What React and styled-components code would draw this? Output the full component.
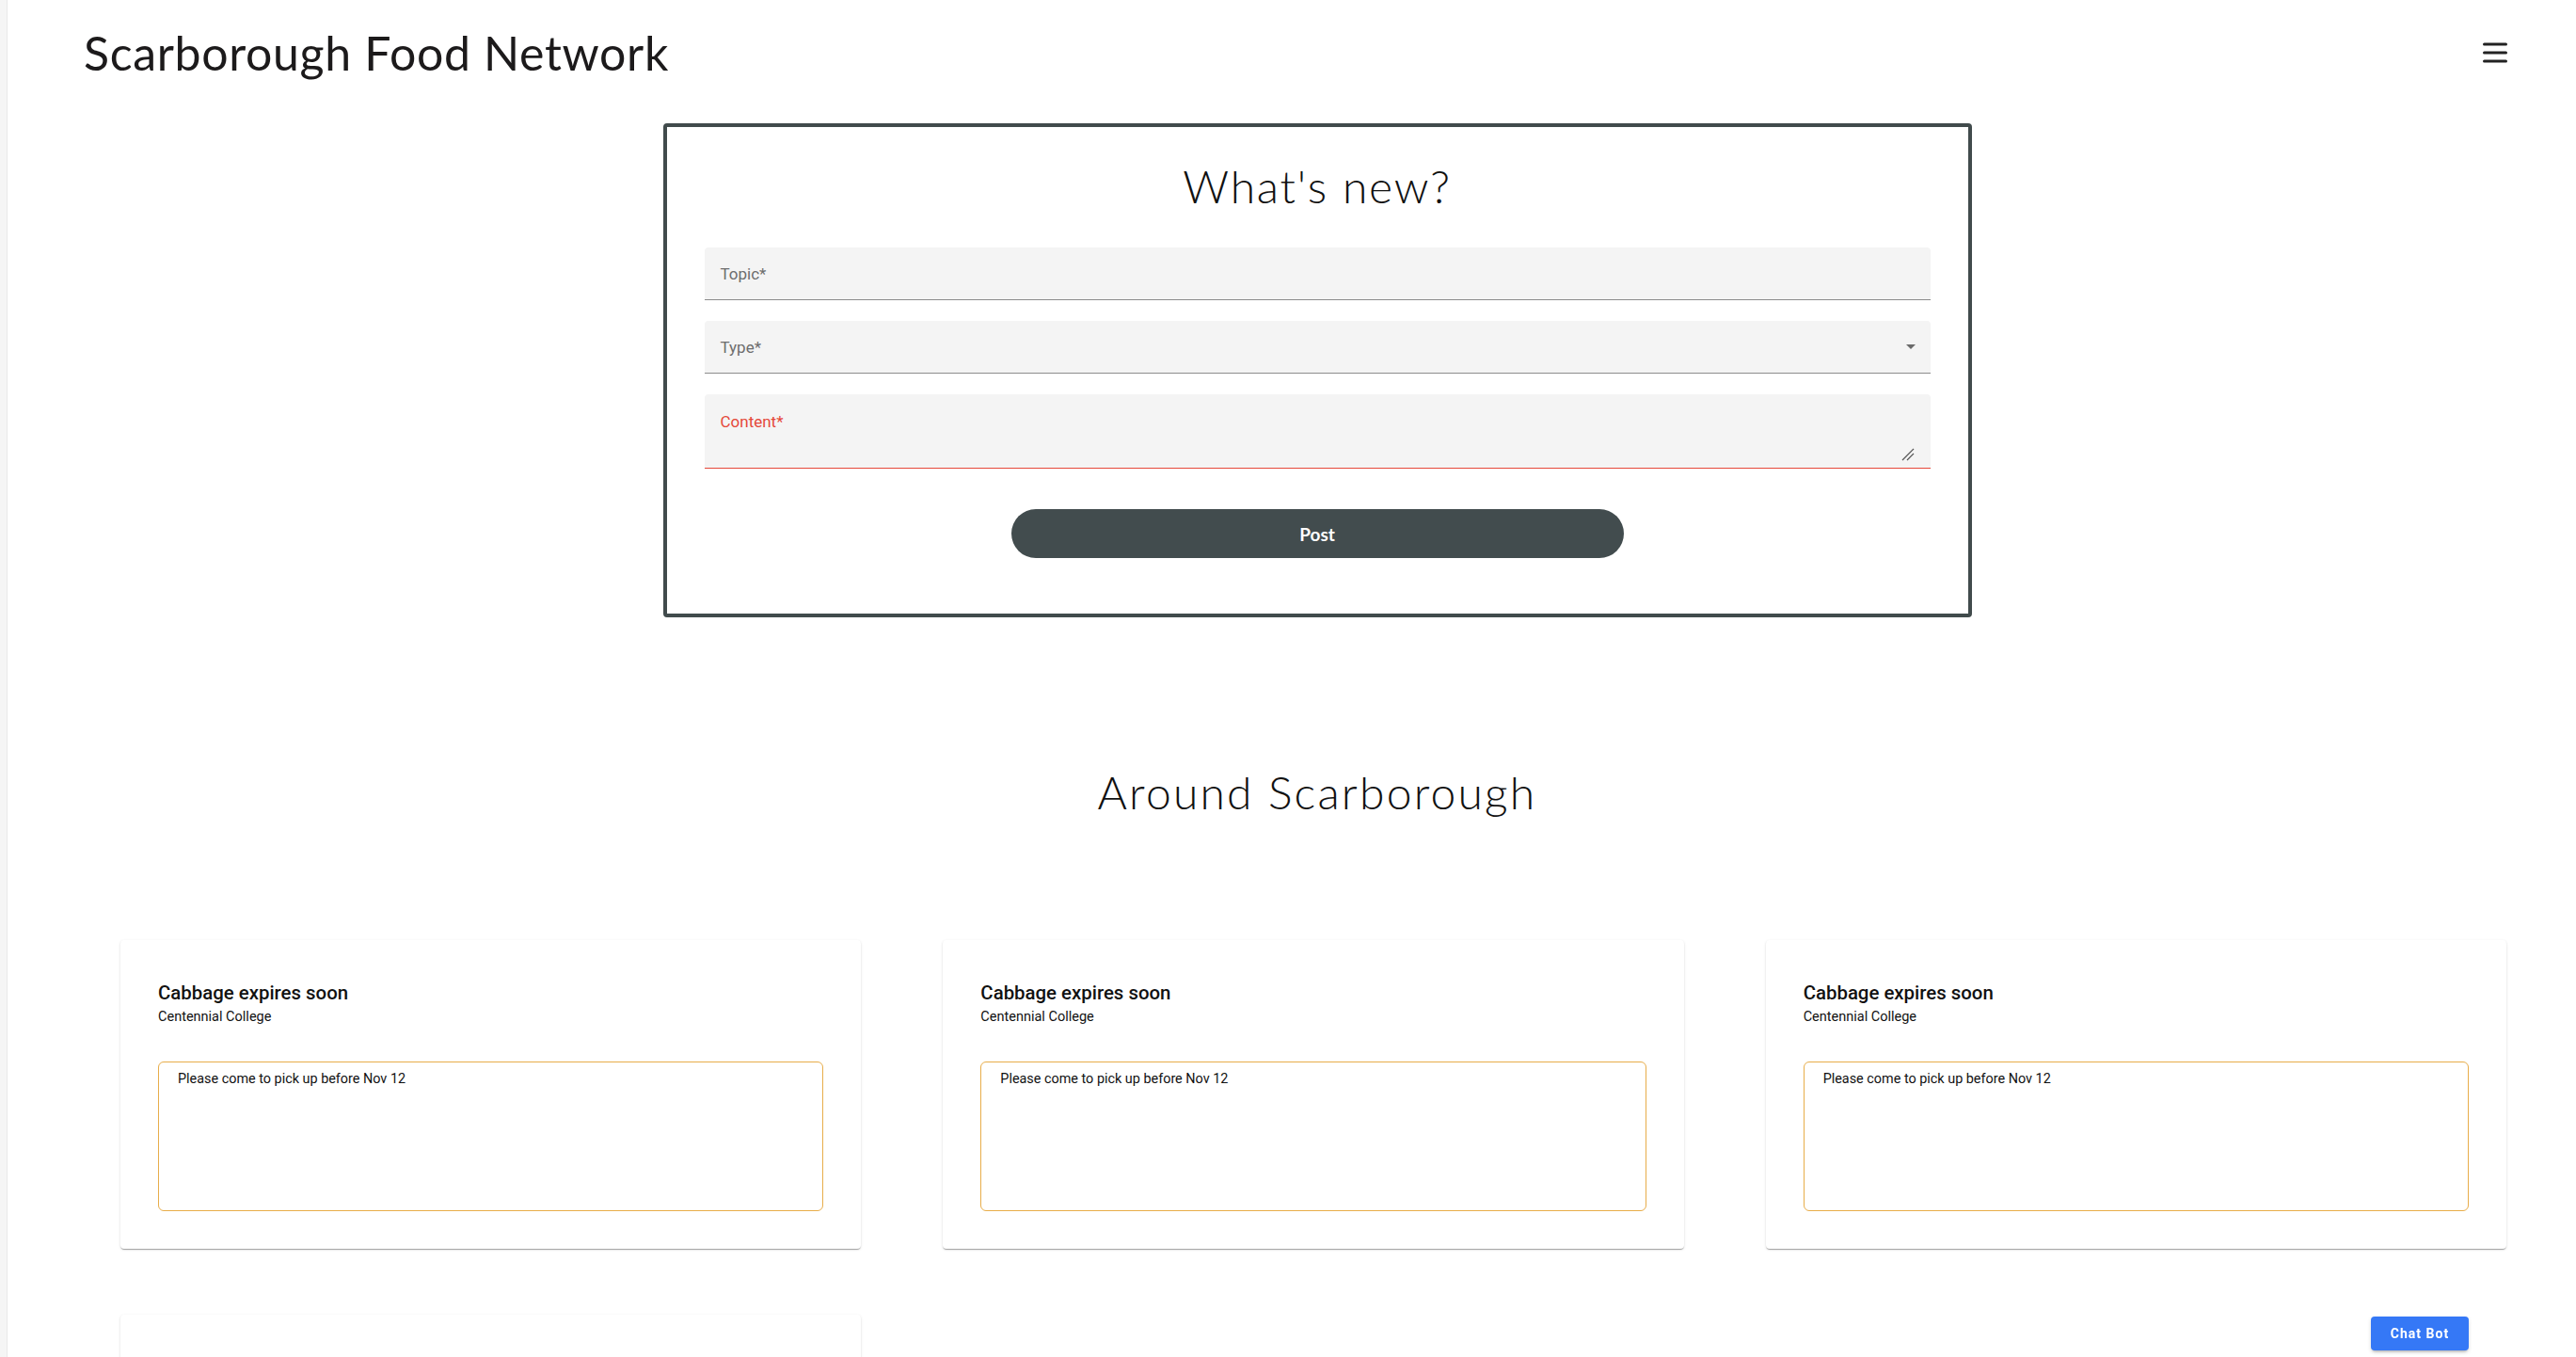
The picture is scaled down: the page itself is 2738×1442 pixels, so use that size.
import React from 'react';
import styled, { createGlobalStyle } from 'styled-components';

const GlobalStyle = createGlobalStyle`
  body {
    margin: 0;
    background: #ffffff;
    font-family: Roboto, "Liberation Sans", sans-serif;
    color: #111;
  }
`;

const Page = styled.div`
  display: flex;
  min-height: 100vh;
`;

const Rail = styled.div`
  width: 7px;
  flex-shrink: 0;
  background: #f5f5f5;
  border-right: 1px solid #e9e9e9;
`;

const Main = styled.main`
  flex: 1;
  display: flex;
  flex-direction: column;
`;

const Header = styled.header`
  height: 112px;
  display: flex;
  align-items: center;
  justify-content: space-between;
  padding: 0 73px 0 81px;
`;

const Brand = styled.h1`
  margin: 0;
  font-family: Lato, "Open Sans", sans-serif;
  font-weight: 400;
  font-size: 50px;
  letter-spacing: 0.65px;
  color: #1c1a1b;
`;

const MenuButton = styled.button`
  border: none;
  background: none;
  padding: 0;
  width: 26px;
  height: 24px;
  display: flex;
  cursor: pointer;
`;

const Content = styled.div`
  padding: 0 74px 60px 120px;
  display: flex;
  flex-direction: column;
  align-items: center;
`;

const ComposeCard = styled.section`
  margin: 19px 0 0 8px;
  width: 1391px;
  box-sizing: border-box;
  border: 4px solid #414b4c;
  border-radius: 4px;
  padding: 34px 40px 59px;
  display: flex;
  flex-direction: column;
`;

const SectionTitle = styled.h2`
  margin: ${(p) => p.$gap || '0'};
  text-align: center;
  font-family: Lato, "Open Sans", sans-serif;
  font-weight: 300;
  font-size: 48px;
  line-height: 58px;
  letter-spacing: ${(p) => p.$spacing || 1.6}px;
  color: #111;
`;

const Fields = styled.div`
  margin-top: 36px;
  display: flex;
  flex-direction: column;
  gap: 22px;
`;

const Field = styled.div`
  position: relative;
  height: ${(p) => p.$h}px;
  box-sizing: border-box;
  background: #f4f4f4;
  border-radius: 4px 4px 0 0;
  border-bottom: 1px solid ${(p) => (p.$error ? '#e5483a' : '#8c8c8c')};
  padding: ${(p) => (p.$top ? '19px 17px 0' : '0 17px')};
  display: flex;
  align-items: ${(p) => (p.$top ? 'flex-start' : 'center')};
  justify-content: space-between;
`;

const FieldLabel = styled.span`
  font-size: 17px;
  line-height: 20px;
  color: ${(p) => (p.$error ? '#e5483a' : '#6d6d6d')};
`;

const Caret = styled.span`
  width: 0;
  height: 0;
  margin-right: -1px;
  border-left: 5px solid transparent;
  border-right: 5px solid transparent;
  border-top: 5px solid #6a6a6a;
`;

const Grip = styled.svg`
  position: absolute;
  right: 17px;
  bottom: 7px;
`;

const PostButton = styled.button`
  align-self: center;
  margin-top: 43px;
  width: 651px;
  height: 52px;
  border: none;
  border-radius: 26px;
  background: #424c4e;
  color: #fff;
  font-family: Lato, "Open Sans", sans-serif;
  font-weight: 700;
  font-size: 19px;
  cursor: pointer;
`;

const Grid = styled.div`
  margin-top: 128px;
  width: 100%;
  display: grid;
  grid-template-columns: repeat(3, 1fr);
  column-gap: 87px;
  row-gap: 70px;
`;

const PostCard = styled.article`
  background: #fff;
  border-radius: 4px;
  padding: 40px;
  box-shadow: 0 2px 1px -1px rgba(0, 0, 0, 0.2), 0 1px 1px 0 rgba(0, 0, 0, 0.14),
    0 1px 3px 0 rgba(0, 0, 0, 0.12);
`;

const PostTitle = styled.div`
  font-size: 20.4px;
  font-weight: 500;
  line-height: 32px;
  color: #111;
`;

const PostPlace = styled.div`
  font-size: 14.5px;
  line-height: 20px;
  color: #111;
`;

const Note = styled.div`
  margin-top: 37px;
  height: 159px;
  box-sizing: border-box;
  border: 1px solid #e8ad4a;
  border-radius: 6px;
  padding: 8px 20px;
  font-size: 14.4px;
  line-height: 20px;
  color: #111;
`;

const ChatBot = styled.button`
  position: fixed;
  right: 114px;
  bottom: 7px;
  width: 104px;
  height: 36px;
  border: none;
  border-radius: 4px;
  background: #3578f6;
  color: #fff;
  font-family: Roboto, sans-serif;
  font-weight: 700;
  font-size: 14px;
  letter-spacing: 1px;
  box-shadow: 0 3px 3px -2px rgba(0, 0, 0, 0.25), 0 2px 4px rgba(0, 0, 0, 0.14);
  cursor: pointer;
`;

const posts = [1, 2, 3, 4].map((id) => ({
  id,
  title: 'Cabbage expires soon',
  place: 'Centennial College',
  body: 'Please come to pick up before Nov 12',
}));

function MenuIcon() {
  return (
    <svg width="26" height="24" viewBox="0 0 26 24">
      <g stroke="#222" strokeWidth="3" strokeLinecap="round">
        <line x1="1.5" y1="3" x2="24.5" y2="3" />
        <line x1="1.5" y1="12" x2="24.5" y2="12" />
        <line x1="1.5" y1="21" x2="24.5" y2="21" />
      </g>
    </svg>
  );
}

export default function App() {
  return (
    <Page>
      <GlobalStyle />
      <Rail />
      <Main>
        <Header>
          <Brand>Scarborough Food Network</Brand>
          <MenuButton aria-label="menu">
            <MenuIcon />
          </MenuButton>
        </Header>
        <Content>
          <ComposeCard>
            <SectionTitle $spacing={1.8}>What's new?</SectionTitle>
            <Fields>
              <Field $h={56}>
                <FieldLabel>Topic*</FieldLabel>
              </Field>
              <Field $h={56}>
                <FieldLabel>Type*</FieldLabel>
                <Caret />
              </Field>
              <Field $h={79} $top $error>
                <FieldLabel $error>Content*</FieldLabel>
                <Grip width="14" height="14" viewBox="0 0 14 14">
                  <g stroke="#555" strokeWidth="1.2">
                    <line x1="1" y1="13" x2="13" y2="1" />
                    <line x1="6" y1="13" x2="13" y2="6" />
                  </g>
                </Grip>
              </Field>
            </Fields>
            <PostButton>Post</PostButton>
          </ComposeCard>

          <SectionTitle $gap="157px 0 0 8px" $spacing={2.2}>
            Around Scarborough
          </SectionTitle>

          <Grid>
            {posts.map((p) => (
              <PostCard key={p.id}>
                <PostTitle>{p.title}</PostTitle>
                <PostPlace>{p.place}</PostPlace>
                <Note>{p.body}</Note>
              </PostCard>
            ))}
          </Grid>
        </Content>
      </Main>
      <ChatBot>Chat Bot</ChatBot>
    </Page>
  );
}
